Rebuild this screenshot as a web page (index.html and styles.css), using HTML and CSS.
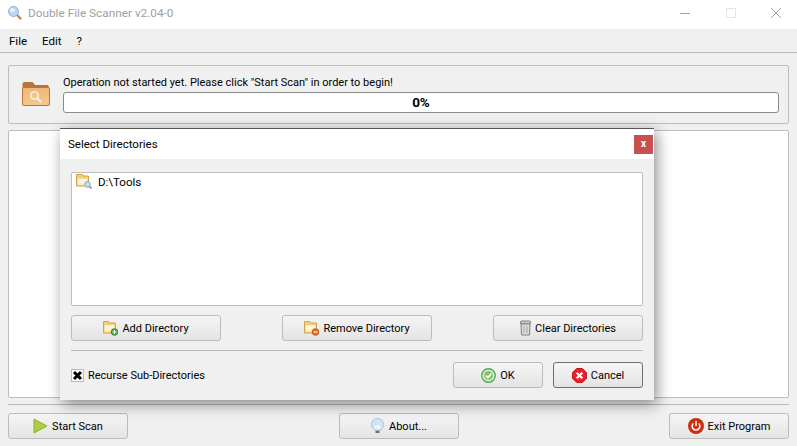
FILE: index.html
```html
<!DOCTYPE html>
<html lang="en">
<head>
<meta charset="utf-8">
<title>Double File Scanner</title>
<link rel="stylesheet" href="styles.css">
</head>
<body>
<div class="app">
  <header class="titlebar">
    <svg class="title-icon" width="14" height="14" viewBox="0 0 14 14"><path d="M8.500 8.500l4 4" stroke="#b98a50" stroke-width="2.400" stroke-linecap="round"/><circle cx="5.500" cy="5.500" r="5" fill="#bcd6f2" stroke="#8fb0d8"/><ellipse cx="4.500" cy="4" rx="2.500" ry="2" fill="#e8f2fc"/></svg>
    <span class="title-text">Double File Scanner v2.04-0</span>
    <div class="winbtns">
      <svg width="10" height="10" viewBox="0 0 10 10"><path d="M0 5.500h10" stroke="#a6a6a6"/></svg>
      <svg width="10" height="10" viewBox="0 0 10 10"><rect x=".5" y=".5" width="9" height="9" fill="none" stroke="#e4e4e4"/></svg>
      <svg width="10" height="10" viewBox="0 0 10 10"><path d="M0 0l10 10M10 0L0 10" stroke="#a0a0a0"/></svg>
    </div>
  </header>
  <nav class="menubar"><span>File</span><span>Edit</span><span>?</span></nav>
  <main class="content">
    <section class="status">
      <svg class="status-icon" width="28" height="25" viewBox="0 0 28 25"><defs><linearGradient id="fb" x1="0" y1="0" x2="0" y2="1"><stop offset="0" stop-color="#f0b877"/><stop offset="1" stop-color="#f4c890"/></linearGradient></defs><path d="M.5 3a2 2 0 0 1 2-2h8l2.500 3h12.500a2 2 0 0 1 1.500 2v4H.5z" fill="#b5743c"/><rect x=".5" y="6.500" width="27" height="18" rx="1.500" fill="url(#fb)" stroke="#b9783f"/><circle cx="12.500" cy="14.500" r="3.800" fill="#f3c48c" stroke="#fdf0de" stroke-width="1.500"/><path d="M15.500 17.500l3.800 3.800" stroke="#fdf0de" stroke-width="2"/></svg>
      <div class="status-main">
        <div class="status-text">Operation not started yet. Please click "Start Scan" in order to begin!</div>
        <div class="progress">0%</div>
      </div>
    </section>
    <section class="results"></section>
    <hr class="rule">
    <footer class="actions">
      <button class="btn main-btn"><svg width="15" height="16" viewBox="0 0 15 16"><path d="M1 1l13 7-13 7z" fill="#a9cf3c" stroke="#8fb02f"/></svg>Start Scan</button>
      <button class="btn main-btn"><svg width="15" height="16" viewBox="0 0 15 16"><path d="M5.500 11h4v4h-4z" fill="#6f6f6f"/><circle cx="7.500" cy="6.500" r="6" fill="#cfe6f5" stroke="#a9c6da"/><path d="M5.500 11V8h4v3" fill="#f2f2f2" stroke="#fff"/></svg>About...</button>
      <button class="btn main-btn"><svg width="16" height="16" viewBox="0 0 16 16"><circle cx="8" cy="8" r="8" fill="#c8300f"/><path d="M5.300 5.500a3.800 3.800 0 1 0 5.400 0" fill="none" stroke="#fff" stroke-width="1.600"/><path d="M8 3v5" stroke="#fff" stroke-width="1.600"/></svg>Exit Program</button>
    </footer>
  </main>
</div>

<div class="dialog">
  <div class="dialog-head">
    <span>Select Directories</span>
    <span class="dialog-close">x</span>
  </div>
  <div class="dialog-body">
    <div class="dirlist">
      <div class="dirrow">
        <svg width="16" height="15" viewBox="0 0 16 15"><path d="M.5.500h6l1 1.500h5v10H.5z" fill="#f4cf78" stroke="#d2a252"/><path d="M1.500 4.500h10v6.500h-10z" fill="#fdeeb8"/><path d="M2.500 6.500h8M2.500 8.500h6" stroke="#fff"/><circle cx="11.500" cy="10.500" r="2.800" fill="#c7dcf0" stroke="#8ba3bb"/><path d="M13.500 12.500l2 2" stroke="#8a7a60" stroke-width="1.500"/></svg>
        <span>D:\Tools</span>
      </div>
    </div>
    <div class="dir-actions">
      <button class="btn dir-btn"><svg width="15" height="16" viewBox="0 0 15 16"><path d="M.5 1.500h5l1 1.500h6v10H.5z" fill="#f4cf78" stroke="#d2a252"/><path d="M1.500 5h10v7h-10z" fill="#fdeeb8"/><path d="M2.500 7h8M2.500 9h5" stroke="#fff"/><circle cx="11.500" cy="12" r="3.300" fill="#4fa84f" stroke="#3b8a3b"/><path d="M9.500 12h4M11.500 10v4" stroke="#fff"/></svg>Add Directory</button>
      <button class="btn dir-btn"><svg width="15" height="16" viewBox="0 0 15 16"><path d="M.5 1.500h5l1 1.500h6v10H.5z" fill="#f4cf78" stroke="#d2a252"/><path d="M1.500 5h10v7h-10z" fill="#fdeeb8"/><path d="M2.500 7h8M2.500 9h5" stroke="#fff"/><circle cx="11.500" cy="12" r="3.300" fill="#e8702a" stroke="#c9561a"/><path d="M9.500 12h4" stroke="#fff"/></svg>Remove Directory</button>
      <button class="btn dir-btn"><svg width="11" height="16" viewBox="0 0 11 16"><rect x=".5" y="1" width="10" height="3" rx="1" fill="#c9c9c9" stroke="#808080"/><path d="M1 4h9l-.5 11h-8z" fill="#dcdcdc" stroke="#808080"/><path d="M4 6v7M7 6v7" stroke="#a8a8a8"/></svg>Clear Directories</button>
    </div>
    <hr class="dialog-rule">
    <div class="dialog-foot">
      <label class="check"><span class="checkbox"><svg width="11" height="11" viewBox="0 0 11 11"><path d="M2 2l7 7M9 2L2 9" stroke="#000" stroke-width="3"/></svg></span>Recurse Sub-Directories</label>
      <div class="confirm">
        <button class="btn ok-btn"><svg width="15" height="15" viewBox="0 0 16 16"><circle cx="8" cy="8" r="7.200" fill="#e4f2df" stroke="#4fa84f" stroke-width="1.500"/><circle cx="8" cy="8" r="4.800" fill="#7cc36c"/><path d="M5 8l2.300 2.300L11 6" fill="none" stroke="#fff" stroke-width="1.800"/></svg>OK</button>
        <button class="btn ok-btn is-default"><svg width="15" height="15" viewBox="0 0 16 16"><path d="M5 .5h6L15.500 5v6L11 15.500H5L.5 11V5z" fill="#e8202a" stroke="#c0101a"/><path d="M5 5l6 6M11 5l-6 6" stroke="#fff" stroke-width="2.400"/></svg>Cancel</button>
      </div>
    </div>
  </div>
</div>
</body>
</html>
```
FILE: styles.css
```css
* { box-sizing: border-box; }
html, body { margin: 0; height: 446px; overflow: hidden; }
body {
  position: relative;
  font-family: Roboto, sans-serif;
  font-size: 11px;
  color: #000;
  background: #f0f0f0;
}
.app { display: flex; flex-direction: column; height: 446px; }

.titlebar {
  flex: none;
  height: 29px;
  background: #fff;
  display: flex;
  align-items: center;
  padding: 0 0 3px 8px;
}
.title-icon { margin-right: 6px; }
.title-text { color: #a0a0a0; font-size: 11.8px; }
.winbtns { margin-left: auto; display: flex; gap: 35.5px; padding: 0 16px 0 0; align-items: center; }

.menubar {
  flex: none;
  height: 24px;
  border-bottom: 1px solid #b9b9b9;
  display: flex;
  align-items: center;
  gap: 15px;
  padding-left: 9px;
  font-size: 11.5px;
}

.content {
  flex: 1;
  display: flex;
  flex-direction: column;
  padding: 12px 8px 7px;
}
.status {
  flex: none;
  height: 59px;
  border: 1px solid #bdbdbd;
  border-radius: 2px;
  display: flex;
  align-items: center;
  padding: 0 9px 2px 13px;
}
.status-icon { margin-right: 13px; flex: none; }
.status-main { flex: 1; }
.status-text { height: 18px; line-height: 17px; }
.progress {
  height: 21px;
  border: 1px solid #8a8a8a;
  border-radius: 3px;
  background: #fff;
  font-size: 13.5px;
  font-weight: 700;
  text-align: center;
  line-height: 19px;
}
.results {
  flex: none;
  margin-top: 6px;
  height: 268px;
  background: #fff;
  border: 1px solid #bdbdbd;
  border-radius: 2px;
}
.rule { margin: 6px 0 8px; border: 0; border-top: 1px solid #b9b9b9; width: 100%; }
.actions { display: flex; justify-content: space-between; }

.btn {
  display: flex;
  align-items: center;
  justify-content: center;
  gap: 2px;
  height: 26px;
  padding: 0;
  font: inherit;
  color: #000;
  border: 1px solid #bcbcbc;
  border-radius: 3px;
  background: linear-gradient(#f5f5f5, #e4e4e4);
}
.btn svg { margin-right: 2px; }
.main-btn { width: 120px; }

.dialog {
  position: absolute;
  left: 60px;
  top: 128px;
  width: 594px;
  height: 272px;
  background: #f0f0f0;
  border-top: 1px solid #555;
  box-shadow: 3px 4px 14px rgba(0, 0, 0, .45);
  display: flex;
  flex-direction: column;
}
.dialog-head {
  height: 30px;
  background: #fff;
  display: flex;
  align-items: center;
  justify-content: space-between;
  padding: 0 1px 0 8px;
  flex: none;
  font-size: 11.5px;
}
.dialog-close {
  width: 19px;
  height: 19px;
  background: #c75050;
  color: #fff;
  font-weight: 700;
  font-size: 10px;
  text-align: center;
  line-height: 17px;
}
.dialog-body { padding: 13px 11px 0; flex: 1; display: flex; flex-direction: column; }
.dirlist {
  flex: none;
  height: 134px;
  background: #fff;
  border: 1px solid #bdbdbd;
  border-radius: 2px;
  padding: 0 4px;
  font-size: 11.5px;
}
.dirrow { display: flex; align-items: center; gap: 6px; height: 17px; }
.dir-actions { display: flex; justify-content: space-between; margin-top: 9px; }
.dir-btn { width: 150px; }
.dialog-rule { margin: 9px 0 0; border: 0; border-top: 1px solid #b9b9b9; width: 100%; }
.dialog-foot {
  display: flex;
  justify-content: space-between;
  align-items: center;
  margin-top: 11px;
}
.check { display: flex; align-items: center; gap: 4px; }
.checkbox {
  width: 13px;
  height: 13px;
  background: #fff;
  border: 1px solid #bbb;
  display: flex;
  align-items: center;
  justify-content: center;
}
.checkbox svg { display: block; }
.confirm { display: flex; gap: 10px; }
.ok-btn { width: 90px; }
.is-default { border-color: #6e6e6e; }
```
